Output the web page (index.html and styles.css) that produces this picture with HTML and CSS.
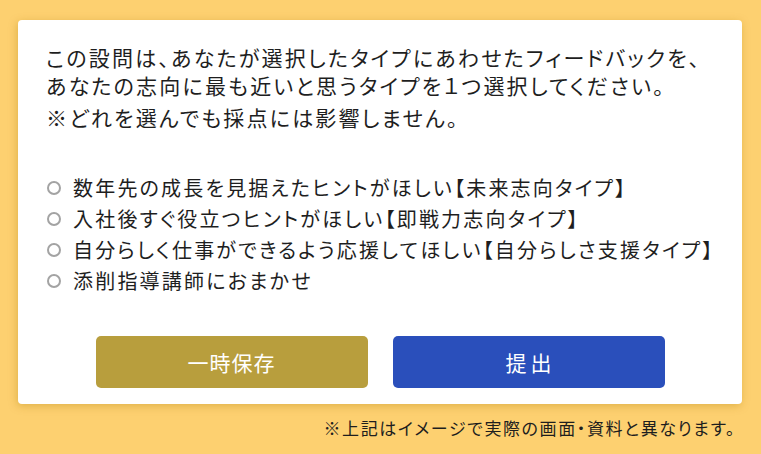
FILE: index.html
```html
<!DOCTYPE html>
<html lang="ja">
<head>
<meta charset="utf-8">
<link rel="stylesheet" href="styles.css">
</head>
<body>
<div class="page">
  <div class="card">
    <p class="lead">この設問は、あなたが選択したタイプにあわせたフィードバックを、<br>あなたの志向に最も近いと思うタイプを１つ選択してください。</p>
    <p class="note">※どれを選んでも採点には影響しません。</p>
    <ul class="options">
      <li class="option"><span class="radio"></span><span>数年先の成長を見据えたヒントがほしい【未来志向タイプ】</span></li>
      <li class="option"><span class="radio"></span><span>入社後すぐ役立つヒントがほしい【即戦力志向タイプ】</span></li>
      <li class="option"><span class="radio"></span><span>自分らしく仕事ができるよう応援してほしい【自分らしさ支援タイプ】</span></li>
      <li class="option"><span class="radio"></span><span>添削指導講師におまかせ</span></li>
    </ul>
    <div class="actions">
      <button class="btn btn-save">一時保存</button>
      <button class="btn btn-submit">提出</button>
    </div>
  </div>
  <p class="footnote">※上記はイメージで実際の画面・資料と異なります。</p>
</div>
</body>
</html>
```
FILE: styles.css
```css
html, body {
  margin: 0;
  padding: 0;
  background: #fdd070;
}
body {
  font-family: "Noto Sans CJK JP", "Noto Sans", sans-serif;
  color: #1e1e1e;
  font-feature-settings: "palt";
}
.page {
  width: 761px;
  height: 454px;
  padding: 20px 19px 0 18px;
  box-sizing: border-box;
}
.card {
  background: #fff;
  border-radius: 4px;
  box-shadow: -1px 2px 8px rgba(170, 120, 0, 0.35);
  padding: 23px 20px 16px 28px;
  height: 384px;
  box-sizing: border-box;
}
.lead {
  margin: 0;
  font-size: 21px;
  line-height: 28px;
  letter-spacing: 2.2px;
}
.note {
  margin: 4px 0 0 0;
  font-size: 21px;
  line-height: 28px;
  letter-spacing: 2.2px;
}
.options {
  list-style: none;
  margin: 41px 0 0 0;
  padding: 0;
}
.option {
  display: flex;
  align-items: center;
  font-size: 20px;
  line-height: 31px;
  letter-spacing: 2.2px;
}
.radio {
  width: 10px;
  height: 10px;
  border: 2px solid #a3a3a3;
  border-radius: 50%;
  background: #fff;
  margin: 0 12px 0 1px;
  flex: none;
}
.actions {
  display: flex;
  justify-content: center;
  gap: 25px;
  margin-top: 40px;
  padding-right: 8px;
}
.btn {
  width: 272px;
  height: 52px;
  border: none;
  border-radius: 5px;
  color: #fff;
  font-family: "Noto Sans CJK JP", "Noto Sans", sans-serif;
  font-size: 21px;
  font-feature-settings: "palt";
  letter-spacing: 1px;
}
.btn-save {
  background: #b89e3d;
}
.btn-submit {
  background: #2a4fbb;
  letter-spacing: 4px;
  text-indent: 4px;
}
.footnote {
  margin: 12px 0 0 0;
  text-align: right;
  font-size: 17px;
  line-height: 24px;
  letter-spacing: 1.6px;
  padding-right: 6px;
}
```
